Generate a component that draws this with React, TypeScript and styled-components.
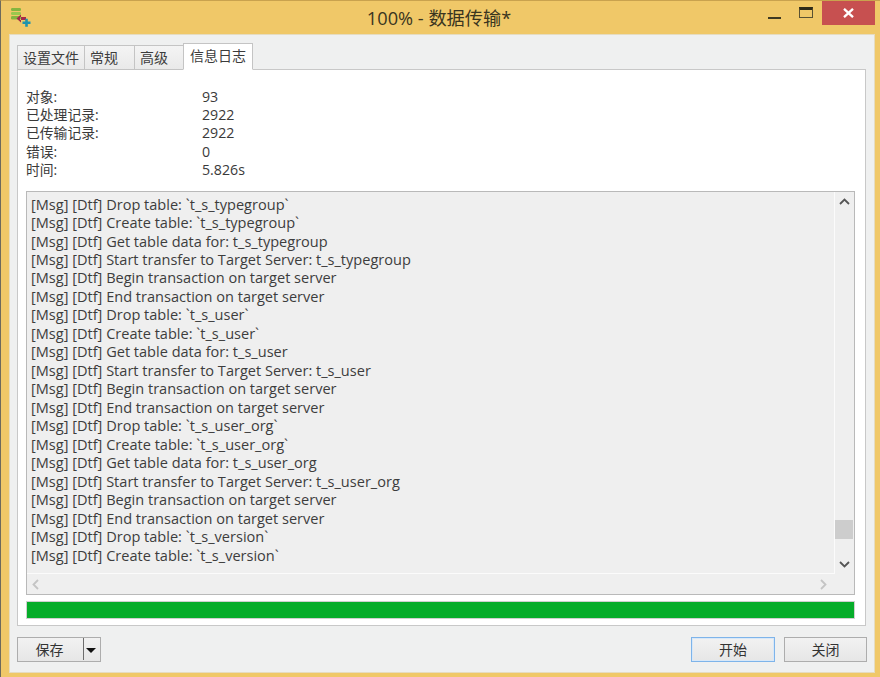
import React from 'react'
import styled, { createGlobalStyle } from 'styled-components'

const Global = createGlobalStyle`
  html, body { margin: 0; padding: 0; width: 880px; height: 677px; overflow: hidden; background: #f0c766; }
`

const FONT = `"Open Sans", "Noto Sans CJK SC", sans-serif`

const Win = styled.div`
  width: 880px;
  height: 677px;
  box-sizing: border-box;
  display: flex;
  flex-direction: column;
  background: #f0c868;
  border-top: 1px solid #c9a24e;
  border-left: 1px solid #6e6a5c;
  font-family: ${FONT};
  color: #333;
`

const TitleBar = styled.div`
  height: 33px;
  flex: none;
  display: flex;
  align-items: flex-start;
  position: relative;
`

const AppIcon = styled.svg`
  position: absolute;
  left: 9px;
  top: 6px;
`

const Title = styled.div`
  flex: 1;
  text-align: center;
  font-size: 18.2px;
  line-height: 34px;
  padding-right: 3px;
  color: #3a3520;
`

const WinButtons = styled.div`
  display: flex;
  align-items: flex-start;
  position: absolute;
  right: 5px;
  top: 0;
`

const MinBtn = styled.div`
  width: 13px;
  height: 2px;
  background: #3f3a22;
  margin: 16px 18px 0 0;
`

const MaxBtn = styled.div`
  width: 12px;
  height: 7px;
  border: 1px solid #5a5232;
  border-top: 3px solid #2e2a18;
  margin: 6px 9px 0 0;
`

const CloseBtn = styled.div`
  width: 53px;
  height: 24px;
  background: #c75050;
  color: #fff;
  display: flex;
  align-items: center;
  justify-content: center;
`

const Client = styled.div`
  flex: 1;
  margin: 0 5px 4px 8px;
  background: #eff0f0;
  border: 1px solid #e6dcc0;
  box-sizing: border-box;
  padding: 8px 7px 10px 7px;
  display: flex;
  flex-direction: column;
`

const Tabs = styled.div`
  display: flex;
  align-items: flex-end;
  height: 26px;
  flex: none;
  position: relative;
  z-index: 1;
`

const Tab = styled.div<{ $w: number; $active?: boolean }>`
  width: ${p => p.$w}px;
  height: ${p => (p.$active ? 27 : 25)}px;
  box-sizing: border-box;
  border: 1px solid #c4c4c4;
  border-bottom: ${p => (p.$active ? '1px solid #fff' : '1px solid #c4c4c4')};
  margin-right: -1px;
  margin-bottom: -1px;
  background: ${p => (p.$active ? '#fff' : 'linear-gradient(#f4f4f4, #e9e9e9)')};
  font-size: 14px;
  line-height: 24px;
  text-align: ${p => (p.$active ? 'center' : 'left')};
  padding-left: ${p => (p.$active ? 0 : 5)}px;
  color: #3c3c3c;
  white-space: nowrap;
`

const Panel = styled.div`
  height: 557px;
  flex: none;
  margin-right: 1px;
  background: #fff;
  border: 1px solid #c8c8c8;
  box-sizing: border-box;
  padding: 18px 10px 7px 8px;
  display: flex;
  flex-direction: column;
`

const Stats = styled.div`
  display: grid;
  grid-template-columns: 176px 1fr;
  grid-auto-rows: 18.2px;
  line-height: 18.2px;
  color: #3a3a3a;
  height: 103px;
  flex: none;
`

const StatKey = styled.div`
  font-size: 13.8px;
`

const StatValue = styled.div`
  font-size: 14.2px;
`

const LogBox = styled.div`
  height: 404px;
  flex: none;
  box-sizing: border-box;
  border: 1px solid #b9b9b9;
  background: #efefef;
  display: grid;
  grid-template-columns: 1fr 19px;
  grid-template-rows: 1fr 20px;
`

const LogText = styled.div`
  padding: 2.6px 0 0 4px;
  font-size: 14.55px;
  line-height: 18.47px;
  color: #3d3d3d;
  overflow: hidden;
  white-space: pre;
  border-right: 1px solid #fbfbfb;
  border-bottom: 1px solid #fbfbfb;
`

const VScroll = styled.div`
  display: flex;
  flex-direction: column;
  align-items: center;
  position: relative;
`

const Thumb = styled.div`
  position: absolute;
  top: 328px;
  left: 0;
  width: 18px;
  height: 19px;
  background: #cdcdcd;
`

const HScroll = styled.div`
  grid-column: 1 / span 2;
  display: flex;
  align-items: center;
  justify-content: space-between;
  padding: 0 27px 0 5px;
`

const Arrow = styled.svg`
  display: block;
`

const UpArrow = styled(Arrow)`
  margin-top: 6px;
`

const DownArrow = styled(Arrow)`
  margin-top: auto;
  margin-bottom: 6px;
`

const Progress = styled.div`
  margin-top: 6px;
  height: 18px;
  flex: none;
  box-sizing: border-box;
  background: #06ad2a;
  border: 1px solid #d0d0d0;
`

const Footer = styled.div`
  flex: 1;
  display: flex;
  align-items: flex-end;
  justify-content: space-between;
`

const Group = styled.div`
  display: flex;
  gap: 9px;
`

const Btn = styled.div<{ $focus?: boolean; $w?: number }>`
  width: ${p => p.$w ?? 84}px;
  height: 25px;
  box-sizing: border-box;
  border: 1px solid ${p => (p.$focus ? '#7eb4ea' : '#adadad')};
  box-shadow: ${p => (p.$focus ? 'inset 0 0 0 1px #d8e8f8' : 'none')};
  background: linear-gradient(#f2f2f2, #e6e6e6);
  font-size: 14px;
  line-height: 24px;
  text-align: center;
  color: #333;
`

const SplitBtn = styled(Btn)`
  display: flex;
  text-align: left;
`

const SplitLabel = styled.div`
  width: 66px;
  padding-right: 2px;
  box-sizing: border-box;
  text-align: center;
  border-right: 1px solid #6d6d6d;
  margin-bottom: 1px;
`

const Caret = styled.div`
  width: 0;
  height: 0;
  border-left: 5px solid transparent;
  border-right: 5px solid transparent;
  border-top: 5px solid #111;
  margin: 10px 0 0 2px;
`

const stats = [
  ['对象:', '93'],
  ['已处理记录:', '2922'],
  ['已传输记录:', '2922'],
  ['错误:', '0'],
  ['时间:', '5.826s'],
]

const tableLines = (t: string) => [
  `[Msg] [Dtf] Drop table: \`${t}\``,
  `[Msg] [Dtf] Create table: \`${t}\``,
  `[Msg] [Dtf] Get table data for: ${t}`,
  `[Msg] [Dtf] Start transfer to Target Server: ${t}`,
  `[Msg] [Dtf] Begin transaction on target server`,
  `[Msg] [Dtf] End transaction on target server`,
]

const lines = [
  ...tableLines('t_s_typegroup'),
  ...tableLines('t_s_user'),
  ...tableLines('t_s_user_org'),
  ...tableLines('t_s_version').slice(0, 2),
]

export default function App() {
  return (
    <Win>
      <Global />
      <TitleBar>
        <AppIcon width="22" height="22" viewBox="0 0 22 22">
          <rect x="1" y="1" width="10" height="3" rx="1.2" fill="#86b53f" />
          <rect x="1" y="5" width="10" height="3" rx="1.2" fill="#9ac84e" />
          <rect x="1" y="9" width="10" height="3.5" rx="1.2" fill="#86b53f" />
          <path d="M10 10h6v3h-6z M11 7.5l-4.5 4 4.500 4z" fill="#a52a4a" />
          <path d="M12.5 14.500h8v2.600h-8z M15.200 11.800h2.600v8h-2.600z" fill="#1f93ad" />
        </AppIcon>
        <Title>100% - 数据传输*</Title>
        <WinButtons>
          <MinBtn />
          <MaxBtn />
          <CloseBtn>
            <svg width="11" height="10" viewBox="0 0 11 10">
              <path d="M1 .8l9 8.400M10 .8L1 9.200" stroke="#fff" strokeWidth="2.3" />
            </svg>
          </CloseBtn>
        </WinButtons>
      </TitleBar>
      <Client>
        <Tabs>
          <Tab $w={68}>设置文件</Tab>
          <Tab $w={51}>常规</Tab>
          <Tab $w={50}>高级</Tab>
          <Tab $w={70} $active>信息日志</Tab>
        </Tabs>
        <Panel>
          <Stats>
            {stats.map(([k, v]) => (
              <React.Fragment key={k}>
                <StatKey>{k}</StatKey>
                <StatValue>{v}</StatValue>
              </React.Fragment>
            ))}
          </Stats>
          <LogBox>
            <LogText>{lines.join('\n')}</LogText>
            <VScroll>
              <UpArrow width="11" height="7" viewBox="0 0 11 7">
                <path d="M1 6l4.500-4.500L10 6" fill="none" stroke="#555" strokeWidth="1.8" />
              </UpArrow>
              <Thumb />
              <DownArrow width="11" height="7" viewBox="0 0 11 7">
                <path d="M1 1l4.500 4.500L10 1" fill="none" stroke="#555" strokeWidth="1.8" />
              </DownArrow>
            </VScroll>
            <HScroll>
              <Arrow width="7" height="11" viewBox="0 0 7 11">
                <path d="M6 1L1.500 5.500 6 10" fill="none" stroke="#c4c4c4" strokeWidth="1.8" />
              </Arrow>
              <Arrow width="7" height="11" viewBox="0 0 7 11">
                <path d="M1 1l4.500 4.500L1 10" fill="none" stroke="#c4c4c4" strokeWidth="1.8" />
              </Arrow>
            </HScroll>
          </LogBox>
          <Progress />
        </Panel>
        <Footer>
          <SplitBtn>
            <SplitLabel>保存</SplitLabel>
            <Caret />
          </SplitBtn>
          <Group>
            <Btn $focus>开始</Btn>
            <Btn $w={83}>关闭</Btn>
          </Group>
        </Footer>
      </Client>
    </Win>
  )
}
